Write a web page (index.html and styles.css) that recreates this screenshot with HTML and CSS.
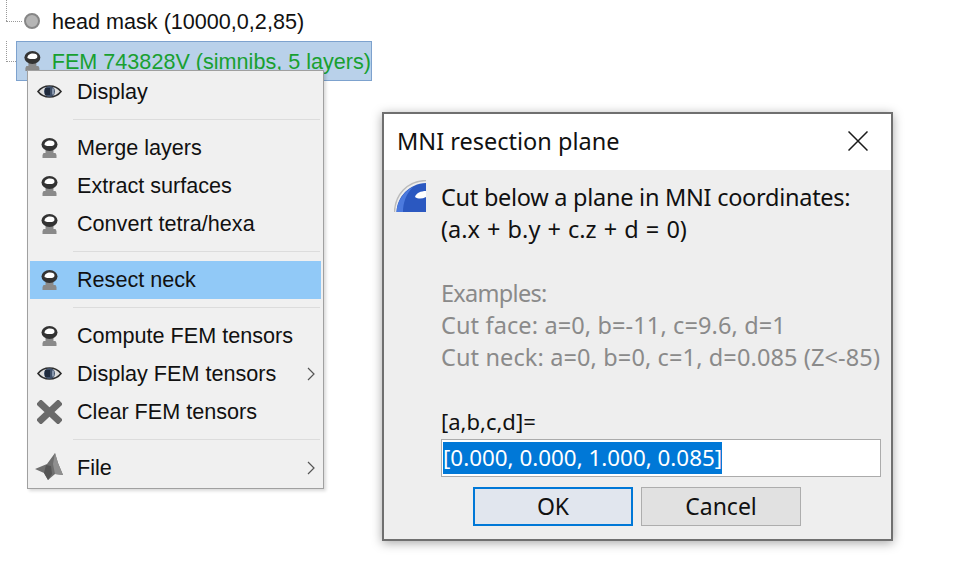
FILE: index.html
```html
<!DOCTYPE html>
<html lang="en">
<head>
    <meta charset="UTF-8">
    <title>MNI resection plane</title>
    <link rel="stylesheet" href="styles.css">
</head>
<body>
    <svg class="defs" width="0" height="0">
        <defs>
            <symbol id="i-head" viewBox="0 0 16 20">
                <path d="M4 12h8v3h2l1 2v3H1v-3l1-2h2z" fill="#8a8a8a"/>
                <ellipse cx="8" cy="6.500" rx="8" ry="6.500" fill="#333"/>
                <path d="M3 7c0-3 2.500-4.500 5.500-4.500s4.500 1 4.500 3c0 2-2 2.500-4 2.500-2.500 0-4.500 0-6-1z" fill="#fff"/>
            </symbol>
            <symbol id="i-eye" viewBox="0 0 25 13">
                <path d="M1 6.500C4 2.500 8 1 12.500 1S21 2.500 24 6.500C21 10.500 17 12 12.500 12S4 10.500 1 6.500z" fill="#dedede" stroke="#2c2c2c" stroke-width="1.600"/>
                <circle cx="12.500" cy="6.500" r="5.500" fill="#3f4f68"/>
                <path d="M8 3h5v7H8z" fill="#1f2a3c"/>
                <path d="M15 3.500h2v6h-2z" fill="#8796ac"/>
            </symbol>
            <symbol id="i-clear" viewBox="0 0 25 24">
                <path d="M4 4l17 16M21 4L4 20" stroke="#6a6a6a" stroke-width="6.800" stroke-linecap="square"/>
            </symbol>
            <symbol id="i-file" viewBox="0 0 28 28">
                <path d="M0 16L12 11 20 0l3 10 5 12-8-1-7 6-4-7z" fill="#6e6e6e"/>
                <path d="M20 0l3 10 5 12-8-1-2-10z" fill="#8f8f8f"/>
                <path d="M11 12l5 1 1 8-4 6-4-7z" fill="#555"/>
            </symbol>
            <symbol id="i-arrow" viewBox="0 0 8 14">
                <path d="M1 1l6 6-6 6" fill="none" stroke="#555" stroke-width="1.200"/>
            </symbol>
        </defs>
    </svg>

    <div class="tree">
        <div class="tree-row">
            <span class="tree-dots"></span>
            <span class="dot-icon"></span>
            <span class="tree-text">head mask (10000,0,2,85)</span>
        </div>
        <div class="tree-row tree-row-selected">
            <span class="tree-dots tree-dots-short"></span>
            <div class="tree-label">
                <svg class="head-small"><use href="#i-head"/></svg>
                <span class="tree-text">FEM 743828V (simnibs, 5 layers)</span>
            </div>
        </div>
    </div>

    <div class="menu">
        <div class="menu-item"><svg class="icon eye"><use href="#i-eye"/></svg><span>Display</span></div>
        <div class="menu-sep"></div>
        <div class="menu-item"><svg class="icon head"><use href="#i-head"/></svg><span>Merge layers</span></div>
        <div class="menu-item"><svg class="icon head"><use href="#i-head"/></svg><span>Extract surfaces</span></div>
        <div class="menu-item"><svg class="icon head"><use href="#i-head"/></svg><span>Convert tetra/hexa</span></div>
        <div class="menu-sep"></div>
        <div class="menu-item menu-item-active"><svg class="icon head"><use href="#i-head"/></svg><span>Resect neck</span></div>
        <div class="menu-sep"></div>
        <div class="menu-item"><svg class="icon head"><use href="#i-head"/></svg><span>Compute FEM tensors</span></div>
        <div class="menu-item"><svg class="icon eye"><use href="#i-eye"/></svg><span>Display FEM tensors</span><svg class="arrow"><use href="#i-arrow"/></svg></div>
        <div class="menu-item"><svg class="icon clear"><use href="#i-clear"/></svg><span>Clear FEM tensors</span></div>
        <div class="menu-sep"></div>
        <div class="menu-item"><svg class="icon file"><use href="#i-file"/></svg><span>File</span><svg class="arrow"><use href="#i-arrow"/></svg></div>
    </div>

    <div class="dialog">
        <div class="dialog-title">
            <span class="dialog-title-text">MNI resection plane</span>
            <svg class="dialog-close" viewBox="0 0 20 20"><path d="M0.500 0.500l19 19M19.500 0.500l-19 19" stroke="#1a1a1a" stroke-width="1.500"/></svg>
        </div>
        <div class="dialog-body">
            <svg class="logo" viewBox="0 0 33 32">
                <path d="M0.500 32C1 15 13 1 32 0.500" fill="none" stroke="#bbb" stroke-width="1.400"/>
                <path d="M2.500 32C3 17 15 3.500 32 3v29z" fill="#2b58c0"/>
                <path d="M2.500 32C3 22 9 12 19 7 12 14 9 23 9 32z" fill="#4c7ade"/>
                <path d="M32 11c-5 0-10 2-11 6 3 2 7 2 11 0z" fill="#fff"/>
            </svg>
            <div class="dialog-content">
                <p class="line-first">Cut below a plane in MNI coordinates:</p>
                <p class="line-formula">(a.x + b.y + c.z + d = 0)</p>
                <p></p>
                <p class="muted line-examples">Examples:</p>
                <p class="muted">Cut face: a=0, b=-11, c=9.6, d=1</p>
                <p class="muted">Cut neck: a=0, b=0, c=1, d=0.085 (Z&lt;-85)</p>
                <p></p>
                <p class="line-label">[a,b,c,d]=</p>
                <div class="dialog-input"><span class="selected">[0.000, 0.000, 1.000, 0.085]</span></div>
            </div>
        </div>
        <div class="dialog-buttons">
            <div class="btn btn-default">OK</div>
            <div class="btn">Cancel</div>
        </div>
    </div>
</body>
</html>
```
FILE: styles.css
```css
* {
    box-sizing: border-box;
    margin: 0;
    padding: 0;
}

body {
    width: 974px;
    height: 588px;
    position: relative;
    overflow: hidden;
    background-color: #fff;
    color: #111;
    font-family: "Liberation Sans", Arial, sans-serif;
    font-size: 21.6px;
}

.defs {
    position: absolute;
}

/* tree */
.tree {
    padding: 1px 0 0 6px;
}

.tree-row {
    height: 40px;
    display: flex;
    align-items: center;
    position: relative;
}

.tree-text {
    padding-top: 1px;
    white-space: nowrap;
}

.tree-dots {
    width: 16px;
    margin-right: 2px;
    border-top: 1px dotted #999;
    flex: none;
}

.tree-dots-short {
    width: 10px;
    margin-right: 0;
    align-self: flex-start;
    margin-top: 20px;
}

.tree-row::before {
    content: '';
    position: absolute;
    left: 0;
    top: -1px;
    height: 21px;
    border-left: 1px dotted #999;
}

.tree-row-selected::before {
    top: 0;
}

.dot-icon {
    width: 16px;
    height: 16px;
    border-radius: 50%;
    background-color: #b5b5b5;
    border: 2px solid #868686;
    margin-right: 12px;
}

.tree-label {
    width: 356px;
    height: 40px;
    display: flex;
    align-items: center;
    background-color: #b9d1ea;
    border: 1px solid #7da2ce;
    color: #18a030;
    padding-left: 7px;
}

.head-small {
    width: 17px;
    height: 20px;
    margin-right: 11px;
}

/* context menu */
.menu {
    position: absolute;
    left: 27px;
    top: 70px;
    width: 297px;
    height: 419px;
    padding: 2px;
    background-color: #f0f0f0;
    border: 1px solid #a0a0a0;
    box-shadow: 2px 2px 3px rgba(0, 0, 0, 0.15);
}

.menu-item {
    height: 38px;
    display: flex;
    align-items: center;
    position: relative;
    padding-left: 47px;
}

.menu-item-active {
    background-color: #91c9f7;
}

.menu-sep {
    height: 1px;
    margin: 8px 1px 9px 43px;
    background-color: #dcdcdc;
}

.icon {
    position: absolute;
    top: 50%;
}

.head {
    left: 11px;
    width: 17px;
    height: 20px;
    margin-top: -10px;
}

.eye {
    left: 7px;
    width: 25px;
    height: 13px;
    margin-top: -7px;
}

.clear {
    left: 7px;
    width: 25px;
    height: 24px;
    margin-top: -12px;
}

.file {
    left: 5px;
    width: 28px;
    height: 28px;
    margin-top: -15px;
}

.arrow {
    position: absolute;
    right: 6px;
    width: 8px;
    height: 14px;
}

/* dialog */
.dialog {
    position: absolute;
    left: 382px;
    top: 112px;
    width: 511px;
    height: 429px;
    background-color: #eeeeee;
    border: 2px solid #6f6f6f;
    box-shadow: 0 2px 10px rgba(0, 0, 0, 0.35);
    font-family: "Noto Sans", "Open Sans", sans-serif;
    font-size: 23.5px;
    display: flex;
    flex-direction: column;
}

.dialog-title {
    height: 56px;
    background-color: #fff;
    display: flex;
    align-items: center;
    justify-content: space-between;
    padding: 0 23px 0 13px;
    flex: none;
}

.dialog-title-text {
    margin-bottom: 2px;
}

.dialog-close {
    width: 20px;
    height: 20px;
    margin-bottom: 2px;
}

.dialog-body {
    display: flex;
    padding: 11px 10px 0 10px;
    flex: none;
}

.logo {
    width: 33px;
    height: 32px;
    flex: none;
    margin-right: 14px;
    margin-top: -1px;
}

.dialog-content {
    flex: 1;
}

.dialog-content p {
    height: 32px;
    line-height: 32px;
    white-space: nowrap;
}

.dialog-content .line-first {
    letter-spacing: -0.27px;
}

.dialog-content .line-formula {
    word-spacing: 1px;
}

.dialog-content .line-label {
    font-size: 22px;
}

.dialog-content .muted {
    color: #8a8a8a;
    letter-spacing: 0.12px;
}

.dialog-content .line-examples {
    letter-spacing: -0.7px;
}

.dialog-input {
    height: 38px;
    background-color: #fff;
    border: 1px solid #ababab;
    margin-top: 2px;
    padding: 2px 1px;
    display: flex;
}

.selected {
    height: 32px;
    line-height: 32px;
    background-color: #0078d7;
    color: #fff;
    font-size: 22.4px;
    white-space: nowrap;
}

.dialog-buttons {
    display: flex;
    gap: 8px;
    padding: 10px 0 0 89px;
}

.btn {
    width: 160px;
    height: 39px;
    line-height: 37px;
    text-align: center;
    font-size: 23px;
    background-color: #e1e1e1;
    border: 1px solid #adadad;
}

.btn-default {
    background-color: #e1e6ee;
    border: 2px solid #0078d7;
    line-height: 35px;
}
```
